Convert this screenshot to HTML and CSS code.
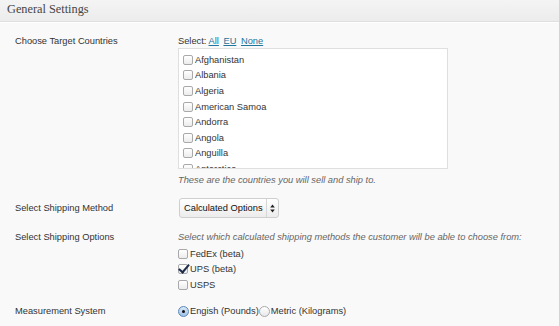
FILE: index.html
```html
<!DOCTYPE html>
<html lang="en">
<head>
    <meta charset="UTF-8">
    <title>General Settings</title>
    <link rel="stylesheet" href="styles.css">
</head>
<body>
    <div class="panel">
        <h3 class="panel-title">General Settings</h3>
        <div class="settings">
            <div class="row">
                <div class="row-label">Choose Target Countries</div>
                <div class="row-field">
                    <div class="select-links">Select: <a href="#">All</a> <a href="#">EU</a> <a href="#">None</a></div>
                    <div class="country-list">
                        <label class="opt"><input type="checkbox"> Afghanistan</label>
                        <label class="opt"><input type="checkbox"> Albania</label>
                        <label class="opt"><input type="checkbox"> Algeria</label>
                        <label class="opt"><input type="checkbox"> American Samoa</label>
                        <label class="opt"><input type="checkbox"> Andorra</label>
                        <label class="opt"><input type="checkbox"> Angola</label>
                        <label class="opt"><input type="checkbox"> Anguilla</label>
                        <label class="opt"><input type="checkbox"> Antarctica</label>
                    </div>
                    <p class="description">These are the countries you will sell and ship to.</p>
                </div>
            </div>

            <div class="row row-method">
                <div class="row-label">Select Shipping Method</div>
                <div class="row-field">
                    <div class="select-box">
                        <select>
                            <option>Calculated Options</option>
                            <option>Flat Rate</option>
                        </select>
                        <span class="select-arrows">
                            <svg width="5" height="9" viewBox="0 0 5 9"><path d="M2.5 0.5 L4.8 3.5 L0.2 3.5 Z M2.5 8.5 L4.8 5.5 L0.2 5.5 Z" fill="#222"/></svg>
                        </span>
                    </div>
                </div>
            </div>

            <div class="row row-options">
                <div class="row-label">Select Shipping Options</div>
                <div class="row-field">
                    <p class="description">Select which calculated shipping methods the customer will be able to choose from:</p>
                    <label class="opt"><input type="checkbox"> FedEx (beta)</label>
                    <label class="opt"><input type="checkbox" checked> UPS (beta)</label>
                    <label class="opt"><input type="checkbox"> USPS</label>
                </div>
            </div>

            <div class="row row-measure">
                <div class="row-label">Measurement System</div>
                <div class="row-field radios">
                    <label class="radio"><input type="radio" name="units" checked>Engish (Pounds)</label>
                    <label class="radio"><input type="radio" name="units">Metric (Kilograms)</label>
                </div>
            </div>
        </div>
    </div>
</body>
</html>
```

FILE: styles.css
```css
* {
    box-sizing: border-box;
}
body {
    margin: 0;
    background-color: #f9f9f9;
    font-family: "Liberation Sans", Arial, sans-serif;
    font-size: 9.3px;
    color: #333;
}
.panel-title {
    margin: 0;
    height: 22px;
    padding: 2px 7px 0;
    font-family: "Liberation Serif", "Times New Roman", serif;
    font-weight: normal;
    font-size: 12.3px;
    color: #464646;
    background: linear-gradient(#f4f4f4, #ececec);
    border-bottom: 1px solid #dfdfdf;
    box-shadow: 0 1px 0 #fff;
}
.settings {
    padding: 0 0 0 15px;
}
.row {
    display: flex;
}
.row-label {
    width: 163px;
    flex-shrink: 0;
}
.row-field {
    flex: 1;
}

/* countries */
.row:first-child {
    padding-top: 13px;
}
.row:first-child .row-label {
    padding-top: 1px;
}
.select-links {
    line-height: 12px;
    margin-bottom: 1px;
}
.select-links a {
    color: #21759b;
    margin-right: 2px;
}
.country-list {
    width: 270px;
    height: 121px;
    overflow: hidden;
    background: #fff;
    border: 1px solid #dfdfdf;
    padding: 3px 0 0 3px;
}
.opt {
    display: flex;
    align-items: center;
    height: 15.6px;
}
.opt input {
    -webkit-appearance: none;
    appearance: none;
    width: 10px;
    height: 10px;
    margin: 0 2px 0 1px;
    border: 1px solid #a9a9a9;
    border-radius: 2px;
    background: linear-gradient(#fff, #ececec);
    position: relative;
}
.opt input:checked::after {
    content: "";
    position: absolute;
    left: 2px;
    top: -3px;
    width: 4px;
    height: 9px;
    border-right: 2px solid #1c2b4a;
    border-bottom: 2px solid #1c2b4a;
    transform: rotate(40deg);
}
.description {
    margin: 4px 0 0;
    font-style: italic;
    color: #666;
    line-height: 14px;
}

/* shipping method */
.row-method {
    padding-top: 11px;
    align-items: center;
}
.select-box {
    display: inline-flex;
    align-items: stretch;
    height: 20px;
    margin-left: 1px;
    border: 1px solid #cfcfcf;
    border-radius: 3px;
    background: linear-gradient(#ffffff, #ececec);
}
.select-box select {
    -webkit-appearance: none;
    appearance: none;
    border: none;
    background: transparent;
    font-family: "Liberation Sans", Arial, sans-serif;
    font-size: 9.3px;
    color: #111;
    padding: 0 2px 0 4px;
    width: 86px;
}
.select-arrows {
    display: flex;
    align-items: center;
    justify-content: center;
    width: 12px;
    border-left: 1px solid #d6d6d6;
}

/* shipping options */
.row-options {
    padding-top: 13px;
}
.row-options .description {
    margin: 0 0 3px;
    line-height: 12px;
}
.row-options .row-label {
    line-height: 12px;
}
.row-options .opt input {
    margin-left: 0;
}

/* measurement */
.row-measure {
    padding-top: 13px;
    align-items: center;
}
.radios {
    display: flex;
    align-items: center;
}
.radio {
    display: flex;
    align-items: center;
}
.radio input {
    -webkit-appearance: none;
    appearance: none;
    width: 11px;
    height: 11px;
    margin: 0 1px 0 0;
    border: 1px solid #a9a9a9;
    border-radius: 50%;
    background: linear-gradient(#fff, #e8e8e8);
    position: relative;
}
.radio input:checked {
    border-color: #5b86b8;
    background: linear-gradient(#d8e8f8, #9fc0e8);
}
.radio input:checked::after {
    content: "";
    position: absolute;
    left: 3px;
    top: 3px;
    width: 3px;
    height: 3px;
    border-radius: 50%;
    background: #111;
}
```
